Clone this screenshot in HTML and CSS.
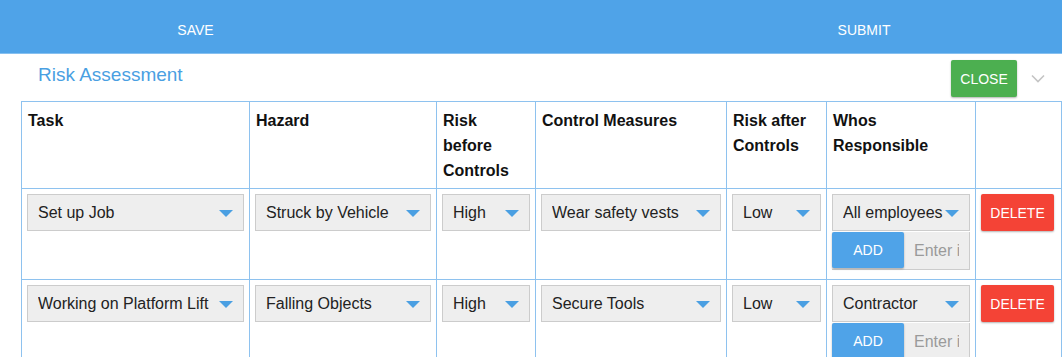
FILE: index.html
```html
<!DOCTYPE html>
<html lang="en">
<head>
    <meta charset="UTF-8">
    <title>Risk Assessment</title>
    <link rel="stylesheet" href="styles.css">
</head>
<body>
    <!-- barra de acciones -->
    <div class="topbar">
        <button class="top-btn save">SAVE</button>
        <button class="top-btn submit">SUBMIT</button>
    </div>

    <div class="panel-head">
        <h2 class="title">Risk Assessment</h2>
        <button class="btn close">CLOSE</button>
        <svg class="chevron" width="14" height="9" viewBox="0 0 14 9">
            <path d="M1 1.5 L7 7.5 L13 1.5" fill="none" stroke="#c4c4c4" stroke-width="1.6"/>
        </svg>
    </div>

    <table class="risk-table">
        <colgroup>
            <col class="c-task">
            <col class="c-hazard">
            <col class="c-before">
            <col class="c-measures">
            <col class="c-after">
            <col class="c-who">
            <col class="c-del">
        </colgroup>
        <thead>
            <tr>
                <th>Task</th>
                <th>Hazard</th>
                <th>Risk before Controls</th>
                <th>Control Measures</th>
                <th>Risk after Controls</th>
                <th>Whos Responsible</th>
                <th></th>
            </tr>
        </thead>
        <tbody>
            <tr>
                <td><div class="select"><span>Set up Job</span><svg width="14" height="7" viewBox="0 0 14 7"><path d="M0 0 H14 L7 7 Z"/></svg></div></td>
                <td><div class="select"><span>Struck by Vehicle</span><svg width="14" height="7" viewBox="0 0 14 7"><path d="M0 0 H14 L7 7 Z"/></svg></div></td>
                <td><div class="select"><span>High</span><svg width="14" height="7" viewBox="0 0 14 7"><path d="M0 0 H14 L7 7 Z"/></svg></div></td>
                <td><div class="select"><span>Wear safety vests</span><svg width="14" height="7" viewBox="0 0 14 7"><path d="M0 0 H14 L7 7 Z"/></svg></div></td>
                <td><div class="select"><span>Low</span><svg width="14" height="7" viewBox="0 0 14 7"><path d="M0 0 H14 L7 7 Z"/></svg></div></td>
                <td>
                    <div class="select"><span>All employees</span><svg width="14" height="7" viewBox="0 0 14 7"><path d="M0 0 H14 L7 7 Z"/></svg></div>
                    <div class="add-group">
                        <button class="btn add">ADD</button>
                        <input type="text" class="add-input" placeholder="Enter in">
                    </div>
                </td>
                <td><button class="btn delete">DELETE</button></td>
            </tr>
            <tr>
                <td><div class="select"><span>Working on Platform Lift</span><svg width="14" height="7" viewBox="0 0 14 7"><path d="M0 0 H14 L7 7 Z"/></svg></div></td>
                <td><div class="select"><span>Falling Objects</span><svg width="14" height="7" viewBox="0 0 14 7"><path d="M0 0 H14 L7 7 Z"/></svg></div></td>
                <td><div class="select"><span>High</span><svg width="14" height="7" viewBox="0 0 14 7"><path d="M0 0 H14 L7 7 Z"/></svg></div></td>
                <td><div class="select"><span>Secure Tools</span><svg width="14" height="7" viewBox="0 0 14 7"><path d="M0 0 H14 L7 7 Z"/></svg></div></td>
                <td><div class="select"><span>Low</span><svg width="14" height="7" viewBox="0 0 14 7"><path d="M0 0 H14 L7 7 Z"/></svg></div></td>
                <td>
                    <div class="select"><span>Contractor</span><svg width="14" height="7" viewBox="0 0 14 7"><path d="M0 0 H14 L7 7 Z"/></svg></div>
                    <div class="add-group">
                        <button class="btn add">ADD</button>
                        <input type="text" class="add-input" placeholder="Enter in">
                    </div>
                </td>
                <td><button class="btn delete">DELETE</button></td>
            </tr>
        </tbody>
    </table>
</body>
</html>
```

FILE: styles.css
```css
/* Estilos generales */
body {
    margin: 0;
    font-family: "Liberation Sans", Arial, sans-serif;
    color: #111;
    background: #fff;
    overflow: hidden;
}

/* Barra superior */
.topbar {
    display: flex;
    justify-content: space-between;
    height: 53px;
    background-color: #4fa3e8;
    border-bottom: 1px solid #86c0f0;
}

.top-btn {
    background: none;
    border: none;
    color: #fff;
    font-family: inherit;
    font-size: 14px;
    padding: 0;
    padding-top: 6px;
}

.save {
    width: 391px;
}

.submit {
    width: 396px;
}

/* Cabecera del panel */
.panel-head {
    display: flex;
    align-items: center;
    height: 47px;
    padding: 0 17px 0 38px;
}

.title {
    flex: 1;
    margin: 0 0 6px 0;
    font-size: 19px;
    font-weight: normal;
    color: #4a9fe2;
}

.chevron {
    margin-left: 14px;
    margin-top: 1px;
}

/* Botones */
.btn {
    font-family: inherit;
    font-size: 14px;
    color: #fff;
    border: none;
    border-radius: 2px;
    cursor: pointer;
    box-shadow: 0 1px 2px rgba(0, 0, 0, 0.3);
}

.close {
    background-color: #4caf50;
    width: 66px;
    height: 37px;
    margin-top: 2px;
}

.delete {
    background-color: #f44336;
    width: 73px;
    height: 37px;
}

.add {
    background-color: #4fa3e8;
    width: 72px;
    height: 36px;
    flex: none;
}

/* Tabla */
.risk-table {
    margin-left: 21px;
    width: 1040px;
    border-collapse: collapse;
    table-layout: fixed;
    border: 1px solid #8ec2ef;
}

.c-task { width: 228px; }
.c-hazard { width: 187px; }
.c-before { width: 99px; }
.c-measures { width: 191px; }
.c-after { width: 100px; }
.c-who { width: 149px; }
.c-del { width: 86px; }

.risk-table th,
.risk-table td {
    border: 1px solid #8ec2ef;
    vertical-align: top;
    text-align: left;
}

.risk-table th {
    font-size: 16px;
    line-height: 25px;
    padding: 6px 6px 5px 6px;
}

.risk-table td {
    padding: 5px;
}

/* Selects */
.select {
    display: flex;
    align-items: center;
    height: 35px;
    padding: 0 10px;
    background-color: #eeeeee;
    border: 1px solid #cccccc;
    font-size: 16px;
    color: #222;
}

.select span {
    flex: 1;
    min-width: 0;
    white-space: nowrap;
    overflow: hidden;
}

.select svg {
    flex: none;
    fill: #4a9fe2;
    margin-top: 1px;
}

.add-group {
    display: flex;
    margin: 1px 0 4px 0;
    height: 37px;
    background-color: #eeeeee;
    border: 1px solid #cccccc;
    border-left: none;
    border-top: none;
}

.add-input {
    flex: 1;
    min-width: 0;
    border: none;
    background: none;
    font-family: inherit;
    font-size: 16px;
    padding: 0 10px;
}

.add-input::placeholder {
    color: #9a9a9a;
}
```
